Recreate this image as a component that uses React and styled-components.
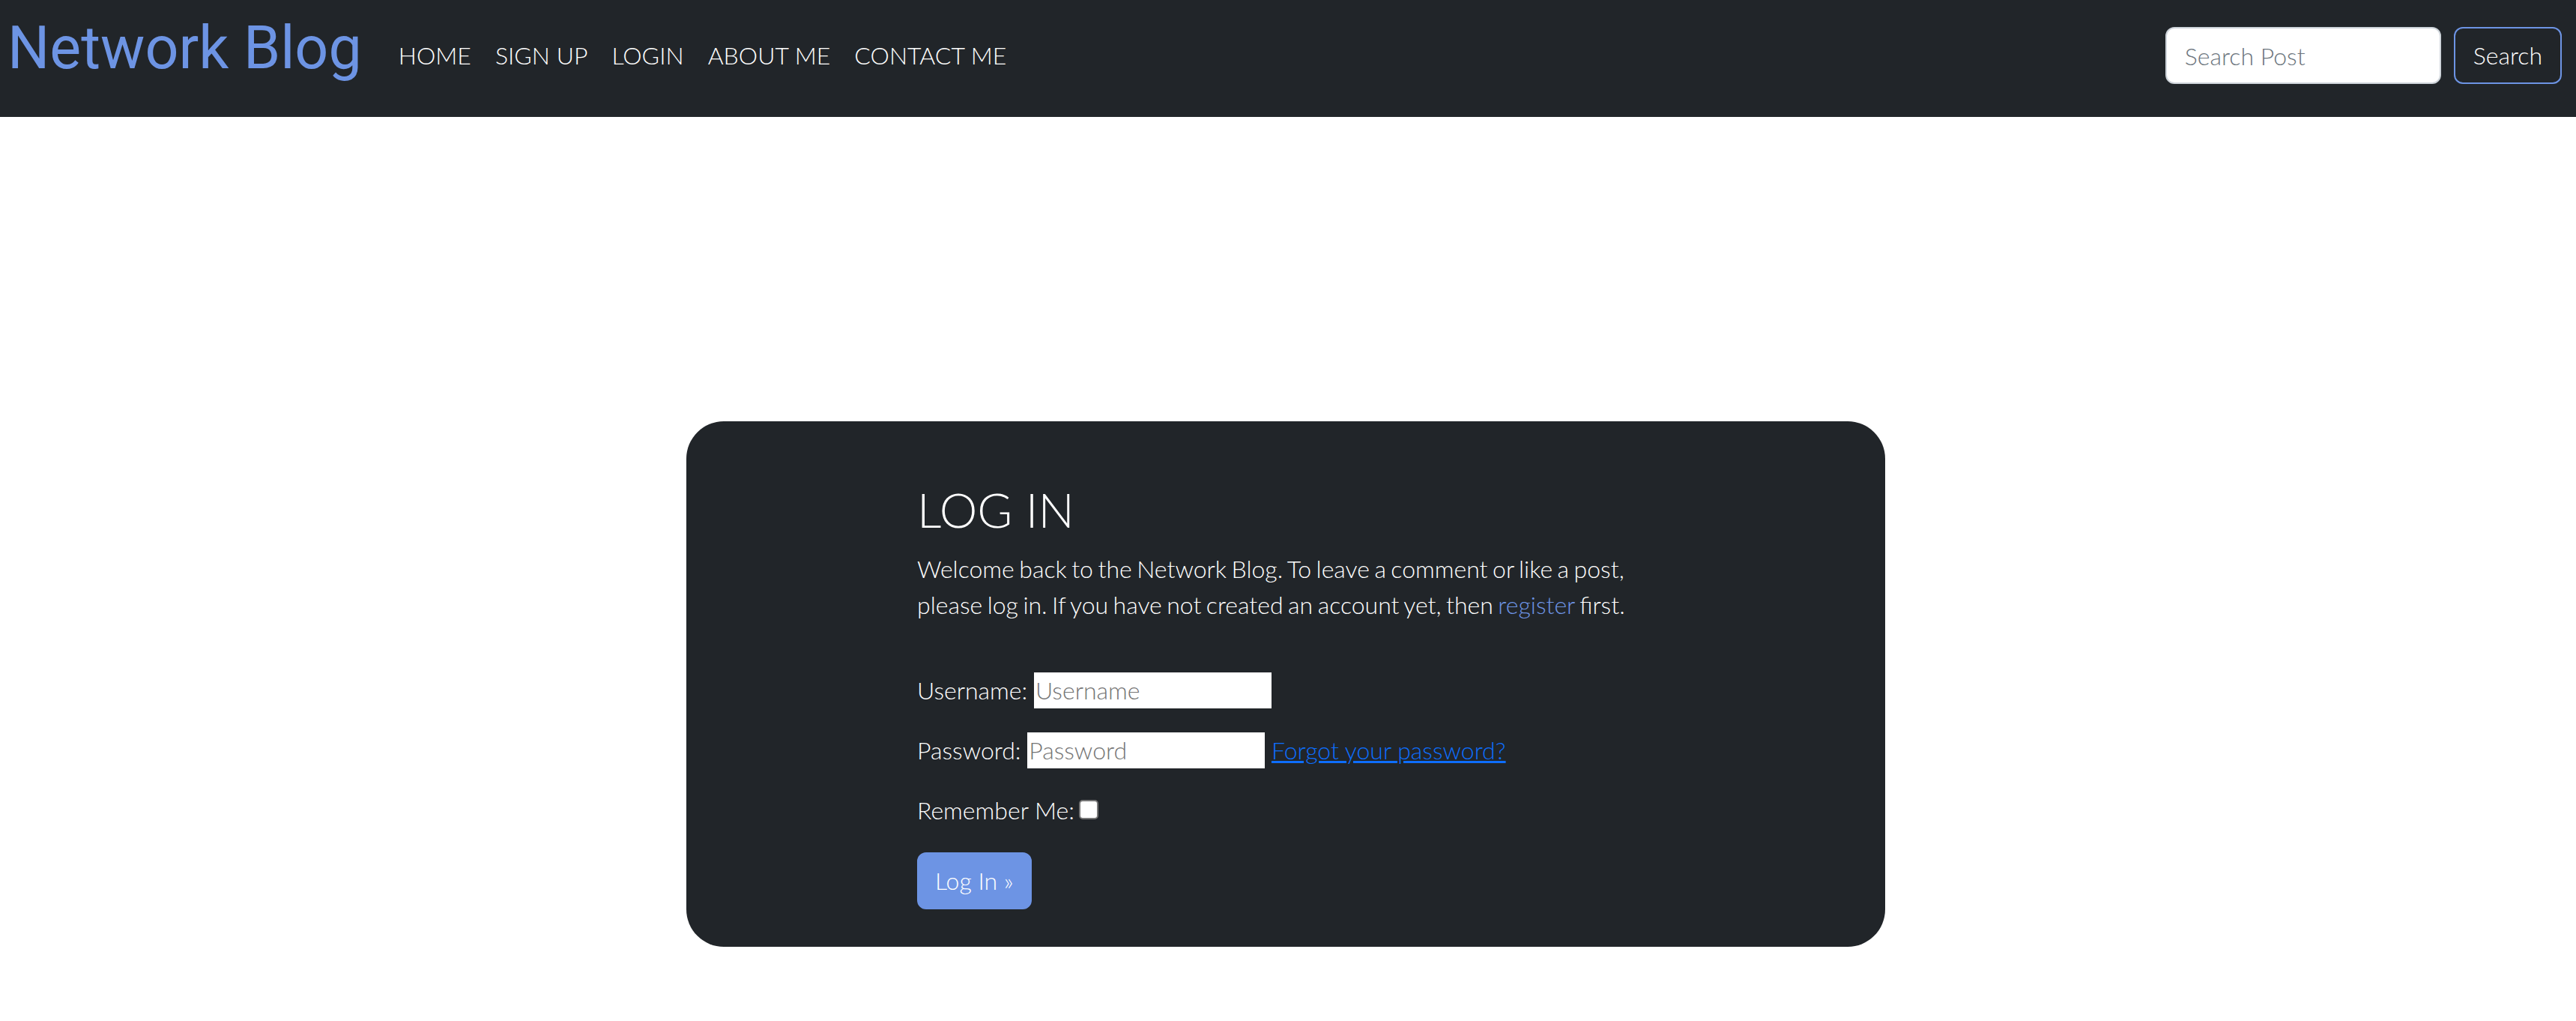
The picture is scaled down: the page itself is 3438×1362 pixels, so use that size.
import React from 'react';
import styled, { createGlobalStyle } from 'styled-components';

const GlobalStyle = createGlobalStyle`
  *, *::before, *::after { box-sizing: border-box; }
  html, body { margin: 0; padding: 0; background: #ffffff; }
  body {
    font-family: Lato, "Open Sans", sans-serif;
    font-weight: 300;
    font-size: 32px;
    line-height: 1.5;
    color: #212529;
  }
`;

const Navbar = styled.nav`
  height: 156px;
  background: #212529;
  display: flex;
  align-items: center;
  padding: 0 19px 8px 10px;
`;

const Brand = styled.a`
  font-family: Roboto, "Noto Sans", sans-serif;
  font-weight: 400;
  font-size: 79px;
  line-height: 1;
  color: #6d94e4;
  text-decoration: none;
  margin: 0 33px 20px 0;
`;

const NavList = styled.ul`
  display: flex;
  list-style: none;
  margin: 0;
  padding: 0;
`;

const NavLink = styled.a`
  display: block;
  padding: 0 16px;
  color: #ffffff;
  font-size: 32px;
  line-height: 48px;
  text-decoration: none;
`;

const SearchForm = styled.form`
  margin-left: auto;
  display: flex;
  gap: 17px;
`;

const SearchInput = styled.input`
  width: 368px;
  height: 76px;
  padding: 0 24px;
  border: 2px solid #ced4da;
  border-radius: 12px;
  font-family: inherit;
  font-weight: 300;
  font-size: 32px;
  color: #212529;
  background: #ffffff;
  outline: none;
  &::placeholder { color: #6c757d; }
`;

const SearchButton = styled.button`
  height: 76px;
  padding: 0 24px;
  background: transparent;
  border: 2px solid #6d94e4;
  border-radius: 12px;
  color: #ffffff;
  font-family: inherit;
  font-weight: 300;
  font-size: 32px;
  line-height: 48px;
`;

const Main = styled.main`
  display: flex;
  justify-content: center;
  padding: 406px 6px 96px 0;
`;

const Card = styled.section`
  width: 1600px;
  background: #212529;
  border-radius: 50px;
  padding: 80px 306px 50px 308px;
  color: #ffffff;
`;

const Title = styled.h2`
  margin: 0 0 16px;
  font-size: 64px;
  font-weight: 300;
  line-height: 1.2;
`;

const Intro = styled.p`
  margin: 0 0 66px;
  word-spacing: -2.2px;
`;

const Accent = styled.a`
  color: #6d94e4;
  text-decoration: none;
`;

const Field = styled.p`
  margin: 0 0 32px;
`;

const TextInput = styled.input`
  width: 317px;
  height: 48px;
  border: none;
  padding: 0 2px;
  font-family: inherit;
  font-weight: 300;
  font-size: 32px;
  line-height: 48px;
  background: #ffffff;
  color: #212529;
  outline: none;
  &::placeholder { color: #757575; }
`;

const PlainLink = styled.a`
  color: #0d6efd;
  text-decoration: underline;
`;

const Checkbox = styled.input`
  appearance: none;
  width: 26px;
  height: 26px;
  margin: 0 0 0 6px;
  border: 2px solid #767676;
  border-radius: 5px;
  background: #ffffff;
  vertical-align: baseline;
`;

const LoginButton = styled.button`
  padding: 12px 22px;
  border: 2px solid #6d94e4;
  background: #6d94e4;
  border-radius: 12px;
  color: #ffffff;
  font-family: inherit;
  font-weight: 300;
  font-size: 32px;
  line-height: 48px;
`;

const links = ['HOME', 'SIGN UP', 'LOGIN', 'ABOUT ME', 'CONTACT ME'];

export default function App() {
  return (
    <>
      <GlobalStyle />
      <Navbar>
        <Brand href="#">Network Blog</Brand>
        <NavList>
          {links.map((l) => (
            <li key={l}>
              <NavLink href="#">{l}</NavLink>
            </li>
          ))}
        </NavList>
        <SearchForm onSubmit={(e) => e.preventDefault()}>
          <SearchInput type="search" placeholder="Search Post" />
          <SearchButton type="submit">Search</SearchButton>
        </SearchForm>
      </Navbar>
      <Main>
        <Card>
          <Title>LOG IN</Title>
          <Intro>
            Welcome back to the Network Blog. To leave a comment or like a post, please log in. If you
            have not created an account yet, then <Accent href="#">register</Accent> first.
          </Intro>
          <form onSubmit={(e) => e.preventDefault()}>
            <Field>
              <label htmlFor="id_login">Username:</label> <TextInput id="id_login" type="text" placeholder="Username" />
            </Field>
            <Field>
              <label htmlFor="id_password">Password:</label> <TextInput id="id_password" type="password" placeholder="Password" />{' '}
              <PlainLink href="#">Forgot your password?</PlainLink>
            </Field>
            <Field>
              <label htmlFor="id_remember">Remember Me:</label><Checkbox id="id_remember" type="checkbox" />
            </Field>
            <LoginButton type="submit">Log In »</LoginButton>
          </form>
        </Card>
      </Main>
    </>
  );
}
